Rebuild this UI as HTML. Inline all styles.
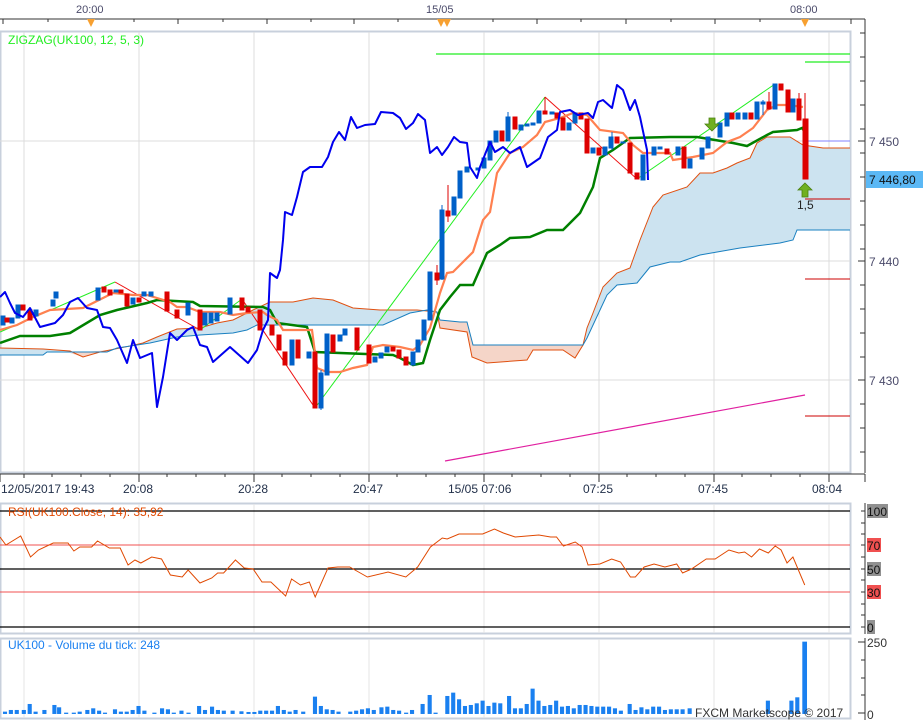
<!DOCTYPE html>
<html><head><meta charset="utf-8"><style>
body{margin:0;background:#fff;width:923px;height:720px;overflow:hidden}
svg{display:block;font-family:"Liberation Sans",sans-serif}
</style></head><body>
<svg width="923" height="720" viewBox="0 0 923 720">
<rect width="923" height="720" fill="#fff"/>
<!-- top axis -->
<g font-size="11" fill="#4a4a6a">
<text x="76" y="13">20:00</text><text x="426" y="13">15/05</text><text x="790" y="13">08:00</text>
</g>
<line x1="0" y1="19" x2="865" y2="19" stroke="#333"/>
<line x1="865" y1="19" x2="865" y2="473" stroke="#333"/>
<g stroke="#333">
<line x1="3" y1="19" x2="3" y2="24"/><line x1="48" y1="19" x2="48" y2="22"/><line x1="90" y1="19" x2="90" y2="24"/><line x1="134" y1="19" x2="134" y2="22"/><line x1="178" y1="19" x2="178" y2="24"/><line x1="223" y1="19" x2="223" y2="22"/><line x1="267" y1="19" x2="267" y2="24"/><line x1="311" y1="19" x2="311" y2="22"/><line x1="354" y1="19" x2="354" y2="24"/><line x1="398" y1="19" x2="398" y2="22"/><line x1="442" y1="19" x2="442" y2="24"/><line x1="493" y1="19" x2="493" y2="22"/><line x1="537" y1="19" x2="537" y2="24"/><line x1="581" y1="19" x2="581" y2="22"/><line x1="626" y1="19" x2="626" y2="24"/><line x1="671" y1="19" x2="671" y2="22"/><line x1="715" y1="19" x2="715" y2="24"/><line x1="760" y1="19" x2="760" y2="22"/><line x1="851" y1="19" x2="851" y2="24"/>
</g>
<g fill="#f7a030">
<polygon points="87,19 95,19 91,27"/><polygon points="437,19 445,19 441,27"/><polygon points="443,19 451,19 447,27"/><polygon points="801,19 809,19 805,27"/>
</g>
<!-- main frame -->
<rect x="0.5" y="31.5" width="850" height="441" fill="none" stroke="#c8d0dc" stroke-width="2"/>
<g stroke="#dcdcdc">
<line x1="24" y1="32" x2="24" y2="472"/><line x1="139" y1="32" x2="139" y2="472"/><line x1="254" y1="32" x2="254" y2="472"/><line x1="369" y1="32" x2="369" y2="472"/><line x1="484" y1="32" x2="484" y2="472"/><line x1="599" y1="32" x2="599" y2="472"/><line x1="714" y1="32" x2="714" y2="472"/><line x1="829" y1="32" x2="829" y2="472"/>
<line x1="0" y1="141" x2="850" y2="141"/><line x1="0" y1="261" x2="850" y2="261"/><line x1="0" y1="380" x2="850" y2="380"/>
</g>
<!-- price axis ticks -->
<g stroke="#333">
<line x1="860" y1="33" x2="865" y2="33"/><line x1="860" y1="57" x2="865" y2="57"/><line x1="860" y1="81" x2="865" y2="81"/><line x1="860" y1="105" x2="865" y2="105"/><line x1="860" y1="129" x2="865" y2="129"/><line x1="858" y1="141" x2="865" y2="141"/><line x1="860" y1="153" x2="865" y2="153"/><line x1="860" y1="177" x2="865" y2="177"/><line x1="860" y1="201" x2="865" y2="201"/><line x1="860" y1="225" x2="865" y2="225"/><line x1="860" y1="249" x2="865" y2="249"/><line x1="858" y1="261" x2="865" y2="261"/><line x1="860" y1="285" x2="865" y2="285"/><line x1="860" y1="309" x2="865" y2="309"/><line x1="860" y1="333" x2="865" y2="333"/><line x1="860" y1="357" x2="865" y2="357"/><line x1="858" y1="380" x2="865" y2="380"/><line x1="860" y1="404" x2="865" y2="404"/><line x1="860" y1="428" x2="865" y2="428"/><line x1="860" y1="452" x2="865" y2="452"/>
</g>
<g font-size="12" fill="#4a4a6a"><text x="869" y="146">7 450</text><text x="869" y="266">7 440</text><text x="869" y="385">7 430</text></g>
<line x1="805" y1="141" x2="850" y2="141" stroke="#8080ff"/>
<rect x="866" y="171" width="57" height="17" fill="#5bb8f5"/>
<text x="869" y="184" font-size="12" fill="#111">7 446,80</text>

<!-- cloud -->
<polygon fill="#cce3f0" points="0,348 43,349 70,351 47,352 43,355 0,355"/>
<polygon fill="#f5d5c8" points="70,353 83,357 100,352 107,352 117,348 110,350"/>
<polygon fill="#cce3f0" points="110,350 130,346 143,343 157,337 177,329 200,328 217,323 233,320 253,310 270,302 293,302 313,298 333,300 353,308 380,310 417,310 437,312 427,310 410,313 383,325 300,325 257,325 247,330 233,333 200,335 177,337 150,343 117,348"/>
<polygon fill="#f5d5c8" points="437,312 440,320 460,322 467,322 473,345 583,345 575,358 563,350 533,350 527,360 487,363 472,357 467,332 440,328"/>
<polygon fill="#cce3f0" points="583,345 587,328 593,313 603,287 617,273 630,268 640,240 653,207 663,195 687,187 700,173 713,173 727,168 737,163 750,158 757,143 767,137 790,137 803,145 823,148 850,148 850,230 797,230 793,240 780,243 740,248 700,255 680,262 670,262 650,267 637,283 617,285 607,295 600,310 587,338"/>
<polyline fill="none" stroke="#e05010" stroke-width="1" points="0,348 43,349 70,351 83,357 100,352 110,350 130,346 143,343 157,337 177,329 200,328 217,323 233,320 253,310 270,302 293,302 313,298 333,300 353,308 380,310 417,310 437,312 440,328 467,332 472,357 487,363 527,360 533,350 563,350 575,358 583,345 587,328 593,313 603,287 617,273 630,268 640,240 653,207 663,195 687,187 700,173 713,173 727,168 737,163 750,158 757,143 767,137 790,137 803,145 823,148 850,148"/>
<polyline fill="none" stroke="#1a80c0" stroke-width="1" points="0,355 43,355 47,352 107,352 117,348 150,343 177,337 200,335 233,333 247,330 257,325 300,325 383,325 410,313 427,310 437,312 440,320 460,322 467,322 473,345 583,345 587,338 600,310 607,295 617,285 637,283 650,267 670,262 680,262 700,255 740,248 780,243 793,240 797,230 850,230"/>

<!-- magenta -->
<line x1="445" y1="461" x2="805" y2="395" stroke="#e020a0" stroke-width="1.2"/>

<!-- zigzag -->
<polyline fill="none" stroke="#22ee22" stroke-width="1" points="0,332 115,282"/>
<polyline fill="none" stroke="#22ee22" stroke-width="1" points="200,330 242,299"/>
<polyline fill="none" stroke="#22ee22" stroke-width="1" points="315,408 545,97"/>
<polyline fill="none" stroke="#22ee22" stroke-width="1" points="637,179 775,84"/>
<polyline fill="none" stroke="#ee1111" stroke-width="1" points="115,282 200,330"/>
<polyline fill="none" stroke="#ee1111" stroke-width="1" points="242,299 315,408"/>
<polyline fill="none" stroke="#ee1111" stroke-width="1" points="545,97 637,179"/>
<line x1="436" y1="54" x2="850" y2="54" stroke="#22ee22" stroke-width="1.3"/>
<line x1="805" y1="62" x2="850" y2="62" stroke="#22ee22" stroke-width="1.3"/>
<line x1="805" y1="199" x2="850" y2="199" stroke="#cc0000"/>
<line x1="805" y1="279" x2="850" y2="279" stroke="#cc0000"/>
<line x1="805" y1="416" x2="850" y2="416" stroke="#cc0000"/>

<!-- kijun green -->
<polyline fill="none" stroke="#008000" stroke-width="2.5" points="0,343 20,336 50,336 70,333 100,315 117,310 147,303 157,300 193,302 200,306 263,307 270,310 277,323 307,327 315,352 393,355 400,358 413,365 423,363 430,340 440,310 450,297 460,285 473,285 487,253 500,245 510,238 530,237 547,230 563,230 580,213 593,187 600,158 613,150 630,138 670,137 697,137 733,143 747,146 767,135 773,132 797,130 802,128 805,132"/>
<!-- tenkan orange -->
<polyline fill="none" stroke="#ff8050" stroke-width="2.2" points="0,330 17,325 33,317 50,310 83,308 103,298 113,293 133,295 147,295 170,302 177,307 187,307 200,312 220,312 233,315 247,313 263,312 267,315 277,320 283,330 312,330 317,368 327,372 340,372 353,368 367,365 373,347 383,345 400,347 413,350 420,345 430,328 440,293 447,273 453,272 473,252 483,220 490,212 497,173 510,153 523,147 537,135 545,122 560,118 573,113 587,115 600,130 623,133 633,145 643,153 670,153 673,160 693,157 713,153 727,142 740,137 753,128 767,110 777,105 788,105 803,107"/>

<!-- candles -->
<g stroke-width="1">
<g fill="#0060c8" stroke="#0060c8">
<rect x="1" y="316" width="4" height="9"/><rect x="10" y="318" width="4" height="5"/><rect x="16" y="305" width="4" height="13"/><rect x="34" y="310" width="4" height="6"/><rect x="51" y="300" width="4" height="6"/><rect x="54" y="292" width="4" height="6"/><rect x="96" y="288" width="4" height="12"/><rect x="114" y="290" width="4" height="2"/><rect x="131" y="298" width="4" height="6"/><rect x="142" y="292" width="4" height="4"/><rect x="149" y="292" width="4" height="4"/><rect x="186" y="303" width="4" height="12"/><rect x="203" y="313" width="4" height="12"/><rect x="209" y="313" width="4" height="10"/><rect x="215" y="313" width="4" height="8"/><rect x="228" y="298" width="4" height="16"/><rect x="290" y="340" width="4" height="25"/><rect x="307" y="352" width="4" height="6"/><rect x="319" y="373" width="4" height="35"/><rect x="325" y="334" width="4" height="41"/><rect x="338" y="335" width="4" height="6"/><rect x="343" y="329" width="4" height="6"/><rect x="373" y="357" width="4" height="5"/><rect x="379" y="353" width="4" height="5"/><rect x="385" y="347" width="4" height="5"/><rect x="411" y="352" width="4" height="13"/><rect x="416" y="340" width="4" height="12"/><rect x="422" y="320" width="4" height="20"/><rect x="428" y="272" width="4" height="48"/><rect x="440" y="210" width="4" height="69"/><rect x="452" y="197" width="4" height="18"/><rect x="458" y="171" width="4" height="27"/><rect x="465" y="167" width="4" height="5"/><rect x="476" y="168" width="4" height="2"/><rect x="482" y="158" width="4" height="10"/><rect x="488" y="141" width="4" height="19"/><rect x="494" y="131" width="4" height="11"/><rect x="506" y="117" width="4" height="24"/><rect x="519" y="125" width="4" height="5"/><rect x="525" y="124" width="4" height="2"/><rect x="531" y="123" width="4" height="2"/><rect x="537" y="111" width="4" height="12"/><rect x="550" y="112" width="4" height="2"/><rect x="567" y="123" width="4" height="7"/><rect x="573" y="113" width="4" height="10"/><rect x="591" y="148" width="4" height="5"/><rect x="603" y="147" width="4" height="8"/><rect x="609" y="137" width="4" height="11"/><rect x="621" y="142" width="4" height="1"/><rect x="641" y="155" width="4" height="25"/><rect x="652" y="147" width="4" height="8"/><rect x="658" y="147" width="4" height="2"/><rect x="676" y="147" width="4" height="8"/><rect x="688" y="159" width="4" height="9"/><rect x="700" y="148" width="4" height="11"/><rect x="706" y="137" width="4" height="11"/><rect x="718" y="123" width="4" height="14"/><rect x="725" y="113" width="4" height="13"/><rect x="736" y="113" width="4" height="6"/><rect x="743" y="113" width="4" height="6"/><rect x="755" y="102" width="4" height="17"/><rect x="761" y="102" width="4" height="2"/><rect x="773" y="84" width="4" height="25"/><rect x="791" y="99" width="4" height="13"/>
</g>
<g fill="#dd0000" stroke="#dd0000">
<rect x="5" y="318" width="4" height="4"/><rect x="21" y="305" width="4" height="5"/><rect x="28" y="310" width="4" height="10"/><rect x="102" y="287" width="4" height="5"/><rect x="108" y="290" width="4" height="5"/><rect x="119" y="290" width="4" height="3"/><rect x="125" y="294" width="4" height="12"/><rect x="137" y="298" width="4" height="4"/><rect x="165" y="292" width="4" height="19"/><rect x="175" y="310" width="4" height="8"/><rect x="198" y="310" width="4" height="20"/><rect x="240" y="298" width="4" height="12"/><rect x="246" y="307" width="4" height="5"/><rect x="258" y="310" width="4" height="20"/><rect x="270" y="325" width="4" height="10"/><rect x="277" y="335" width="4" height="15"/><rect x="283" y="352" width="4" height="13"/><rect x="296" y="340" width="4" height="18"/><rect x="313" y="352" width="4" height="56"/><rect x="331" y="335" width="4" height="17"/><rect x="355" y="328" width="4" height="22"/><rect x="367" y="345" width="4" height="18"/><rect x="391" y="347" width="4" height="4"/><rect x="397" y="350" width="4" height="8"/><rect x="404" y="357" width="4" height="8"/><rect x="435" y="273" width="4" height="7"/><rect x="446" y="211" width="4" height="5"/><rect x="500" y="131" width="4" height="10"/><rect x="513" y="117" width="4" height="12"/><rect x="543" y="111" width="4" height="3"/><rect x="555" y="113" width="4" height="5"/><rect x="561" y="118" width="4" height="12"/><rect x="579" y="113" width="4" height="6"/><rect x="585" y="119" width="4" height="34"/><rect x="597" y="148" width="4" height="7"/><rect x="615" y="137" width="4" height="6"/><rect x="628" y="143" width="4" height="30"/><rect x="635" y="173" width="4" height="6"/><rect x="665" y="149" width="4" height="5"/><rect x="682" y="147" width="4" height="21"/><rect x="730" y="113" width="4" height="6"/><rect x="749" y="113" width="4" height="6"/><rect x="767" y="102" width="4" height="7"/><rect x="779" y="84" width="4" height="6"/><rect x="786" y="90" width="4" height="22"/><rect x="797" y="99" width="4" height="21"/><rect x="803" y="119" width="5" height="60"/>
<line x1="805" y1="93" x2="805" y2="120"/><line x1="437" y1="265" x2="437" y2="285"/><line x1="448" y1="185" x2="448" y2="222"/><line x1="545" y1="97" x2="545" y2="112"/><line x1="799" y1="93" x2="799" y2="100"/><line x1="769" y1="92" x2="769" y2="103"/>
</g>
<g stroke="#0060c8"><line x1="442" y1="205" x2="442" y2="280"/><line x1="321" y1="370" x2="321" y2="410"/><line x1="612" y1="132" x2="612" y2="150"/><line x1="508" y1="112" x2="508" y2="120"/><line x1="763" y1="100" x2="763" y2="115"/></g>
</g>

<!-- blue line -->
<polyline fill="none" stroke="#0000ee" stroke-width="2" stroke-linejoin="round" points="0,297 5,292 10,303 15,313 23,317 30,308 40,327 55,323 63,315 70,302 78,298 87,308 97,310 103,327 110,328 117,340 127,363 133,340 140,358 152,353 157,407 163,377 170,333 177,340 187,330 193,327 200,345 207,347 213,362 230,347 248,363 257,350 263,330 268,320 270,273 277,278 280,270 283,240 285,212 292,215 297,197 303,172 310,167 322,167 328,157 333,142 339,132 345,140 351,117 357,128 365,125 375,124 381,112 393,113 400,118 406,129 413,123 418,114 425,120 430,153 437,147 442,155 448,147 454,137 460,142 467,143 470,167 477,178 480,167 490,142 495,152 503,147 510,153 520,147 527,167 540,158 548,137 557,130 560,112 570,110 578,115 588,113 593,118 598,102 603,100 612,108 617,85 623,90 630,110 635,100 640,117 647,150 648,180"/>

<text x="8" y="44" font-size="12" fill="#22ee22">ZIGZAG(UK100, 12, 5, 3)</text>
<!-- green up arrow -->
<polygon points="805,183 812,190 808,190 808,197 802,197 802,190 798,190" fill="#70b020" stroke="#4a8010" stroke-width="0.8"/>
<polygon points="712,131 719,124 715,124 715,118 709,118 709,124 705,124" fill="#70b020" stroke="#4a8010" stroke-width="0.8"/>
<text x="797" y="209" font-size="12" fill="#222">1,5</text>

<!-- bottom time axis -->
<line x1="0" y1="474" x2="865" y2="474" stroke="#333"/>
<g stroke="#333">
<line x1="0" y1="474" x2="0" y2="482"/><line x1="24" y1="474" x2="24" y2="478"/><line x1="139" y1="474" x2="139" y2="482"/><line x1="254" y1="474" x2="254" y2="482"/><line x1="369" y1="474" x2="369" y2="482"/><line x1="484" y1="474" x2="484" y2="482"/><line x1="599" y1="474" x2="599" y2="482"/><line x1="714" y1="474" x2="714" y2="482"/><line x1="829" y1="474" x2="829" y2="482"/><line x1="865" y1="474" x2="865" y2="482"/>
<line x1="52" y1="474" x2="52" y2="477"/><line x1="81" y1="474" x2="81" y2="477"/><line x1="110" y1="474" x2="110" y2="477"/><line x1="167" y1="474" x2="167" y2="477"/><line x1="196" y1="474" x2="196" y2="477"/><line x1="225" y1="474" x2="225" y2="477"/><line x1="282" y1="474" x2="282" y2="477"/><line x1="311" y1="474" x2="311" y2="477"/><line x1="340" y1="474" x2="340" y2="477"/><line x1="397" y1="474" x2="397" y2="477"/><line x1="426" y1="474" x2="426" y2="477"/><line x1="455" y1="474" x2="455" y2="477"/><line x1="512" y1="474" x2="512" y2="477"/><line x1="541" y1="474" x2="541" y2="477"/><line x1="570" y1="474" x2="570" y2="477"/><line x1="627" y1="474" x2="627" y2="477"/><line x1="656" y1="474" x2="656" y2="477"/><line x1="685" y1="474" x2="685" y2="477"/><line x1="742" y1="474" x2="742" y2="477"/><line x1="771" y1="474" x2="771" y2="477"/><line x1="800" y1="474" x2="800" y2="477"/>
</g>
<g font-size="12" fill="#22304a"><text x="1" y="493">12/05/2017 19:43</text><text x="123" y="493">20:08</text><text x="238" y="493">20:28</text><text x="353" y="493">20:47</text><text x="448" y="493">15/05 07:06</text><text x="583" y="493">07:25</text><text x="698" y="493">07:45</text><text x="812" y="493">08:04</text></g>

<!-- RSI panel -->
<rect x="0.5" y="503.5" width="850" height="130" fill="none" stroke="#c8d0dc" stroke-width="2"/>
<g stroke="#e4e4e4"><line x1="24" y1="504" x2="24" y2="633"/><line x1="139" y1="504" x2="139" y2="633"/><line x1="254" y1="504" x2="254" y2="633"/><line x1="369" y1="504" x2="369" y2="633"/><line x1="484" y1="504" x2="484" y2="633"/><line x1="599" y1="504" x2="599" y2="633"/><line x1="714" y1="504" x2="714" y2="633"/><line x1="829" y1="504" x2="829" y2="633"/></g>
<line x1="0" y1="511" x2="850" y2="511" stroke="#000" stroke-width="1.3"/>
<line x1="0" y1="569" x2="850" y2="569" stroke="#000" stroke-width="1.3"/>
<line x1="0" y1="627" x2="850" y2="627" stroke="#000" stroke-width="1.3"/>
<line x1="0" y1="545" x2="850" y2="545" stroke="#f05050"/>
<line x1="0" y1="592" x2="850" y2="592" stroke="#f05050"/>
<line x1="865" y1="503" x2="865" y2="634" stroke="#333"/>
<g stroke="#333"><line x1="861" y1="511" x2="865" y2="511"/><line x1="861" y1="523" x2="865" y2="523"/><line x1="861" y1="534" x2="865" y2="534"/><line x1="861" y1="545" x2="865" y2="545"/><line x1="861" y1="557" x2="865" y2="557"/><line x1="861" y1="569" x2="865" y2="569"/><line x1="861" y1="580" x2="865" y2="580"/><line x1="861" y1="592" x2="865" y2="592"/><line x1="861" y1="604" x2="865" y2="604"/><line x1="861" y1="615" x2="865" y2="615"/><line x1="861" y1="627" x2="865" y2="627"/></g>
<rect x="867" y="504" width="21" height="14" fill="#909090"/><rect x="867" y="538" width="14" height="14" fill="#f05050"/><rect x="867" y="562" width="14" height="14" fill="#909090"/><rect x="867" y="585" width="14" height="14" fill="#f05050"/><rect x="867" y="620" width="8" height="14" fill="#909090"/>
<g font-size="12" fill="#111"><text x="867" y="516">100</text><text x="867" y="550">70</text><text x="867" y="574">50</text><text x="867" y="597">30</text><text x="867" y="632">0</text></g>
<g transform="scale(0.985,1)">
<polyline fill="none" stroke="#e04800" stroke-width="1" points="0,537 6,545 21,536 31,557 39,550 54,543 69,543 75,551 81,547 93,547 99,541 111,548 122,548 130,565 137,560 143,563 154,557 164,559 173,575 185,577 191,570 203,583 215,578 221,573 227,573 239,560 248,568 257,569 266,582 275,582 290,596 296,579 305,585 314,582 320,597 333,568 343,567 355,567 364,572 373,577 394,572 412,577 424,567 437,547 449,538 454,539 466,534 490,534 502,529 511,533 523,537 547,535 559,537 565,537 572,546 584,542 591,547 597,565 609,564 621,559 630,562 640,577 645,577 654,567 664,564 675,567 687,564 693,573 702,569 717,559 726,559 740,550 750,553 756,552 763,557 771,549 780,553 787,546 793,550 799,563 805,557 817,585"/>
</g>
<text x="8" y="516" font-size="12" fill="#e04800">RSI(UK100.Close, 14): 35,92</text>

<!-- volume panel -->
<rect x="0.5" y="638.5" width="850" height="80" fill="none" stroke="#c8d0dc" stroke-width="2"/>
<g stroke="#e4e4e4"><line x1="24" y1="639" x2="24" y2="718"/><line x1="139" y1="639" x2="139" y2="718"/><line x1="254" y1="639" x2="254" y2="718"/><line x1="369" y1="639" x2="369" y2="718"/><line x1="484" y1="639" x2="484" y2="718"/><line x1="599" y1="639" x2="599" y2="718"/><line x1="714" y1="639" x2="714" y2="718"/><line x1="829" y1="639" x2="829" y2="718"/></g>
<line x1="865" y1="638" x2="865" y2="720" stroke="#333"/>
<g stroke="#333"><line x1="858" y1="642" x2="865" y2="642"/><line x1="861" y1="660" x2="865" y2="660"/><line x1="861" y1="678" x2="865" y2="678"/><line x1="861" y1="695" x2="865" y2="695"/><line x1="858" y1="713" x2="865" y2="713"/></g>
<g font-size="12" fill="#333"><text x="867" y="647">250</text><text x="867" y="719">0</text></g>
<g fill="#1a80f0" transform="translate(0,460) scale(0.5882,0.3333)">
<rect x="5" y="755" width="7" height="7"/><rect x="15" y="750" width="7" height="12"/><rect x="25" y="750" width="7" height="12"/><rect x="37" y="750" width="7" height="12"/><rect x="47" y="732" width="7" height="30"/><rect x="57" y="755" width="7" height="7"/><rect x="72" y="750" width="7" height="12"/><rect x="89" y="735" width="7" height="27"/><rect x="97" y="742" width="7" height="20"/><rect x="109" y="758" width="7" height="4"/><rect x="122" y="758" width="7" height="4"/><rect x="132" y="755" width="7" height="7"/><rect x="145" y="750" width="7" height="12"/><rect x="155" y="745" width="7" height="17"/><rect x="165" y="752" width="7" height="10"/><rect x="175" y="758" width="7" height="4"/><rect x="192" y="748" width="7" height="14"/><rect x="202" y="755" width="7" height="7"/><rect x="212" y="755" width="7" height="7"/><rect x="222" y="750" width="7" height="12"/><rect x="232" y="738" width="7" height="24"/><rect x="242" y="752" width="7" height="10"/><rect x="259" y="758" width="7" height="4"/><rect x="272" y="745" width="7" height="17"/><rect x="282" y="748" width="7" height="14"/><rect x="292" y="758" width="7" height="4"/><rect x="305" y="752" width="7" height="10"/><rect x="317" y="758" width="7" height="4"/><rect x="335" y="738" width="7" height="24"/><rect x="345" y="750" width="7" height="12"/><rect x="357" y="740" width="7" height="22"/><rect x="367" y="750" width="7" height="12"/><rect x="377" y="752" width="7" height="10"/><rect x="392" y="752" width="7" height="10"/><rect x="407" y="754" width="7" height="8"/><rect x="419" y="756" width="7" height="6"/><rect x="429" y="756" width="7" height="6"/><rect x="439" y="752" width="7" height="10"/><rect x="449" y="752" width="7" height="10"/><rect x="459" y="752" width="7" height="10"/><rect x="469" y="738" width="7" height="24"/><rect x="479" y="750" width="7" height="12"/><rect x="489" y="755" width="7" height="7"/><rect x="499" y="750" width="7" height="12"/><rect x="512" y="755" width="7" height="7"/><rect x="532" y="710" width="7" height="52"/><rect x="542" y="738" width="7" height="24"/><rect x="552" y="748" width="7" height="14"/><rect x="562" y="750" width="7" height="12"/><rect x="572" y="755" width="7" height="7"/><rect x="592" y="755" width="7" height="7"/><rect x="602" y="752" width="7" height="10"/><rect x="612" y="748" width="7" height="14"/><rect x="622" y="745" width="7" height="17"/><rect x="632" y="750" width="7" height="12"/><rect x="645" y="742" width="7" height="20"/><rect x="655" y="740" width="7" height="22"/><rect x="665" y="750" width="7" height="12"/><rect x="675" y="752" width="7" height="10"/><rect x="687" y="758" width="7" height="4"/><rect x="697" y="750" width="7" height="12"/><rect x="715" y="732" width="7" height="30"/><rect x="727" y="705" width="7" height="57"/><rect x="737" y="758" width="7" height="4"/><rect x="757" y="708" width="7" height="54"/><rect x="767" y="698" width="7" height="64"/><rect x="777" y="718" width="7" height="44"/><rect x="787" y="738" width="7" height="24"/><rect x="797" y="735" width="7" height="27"/><rect x="807" y="730" width="7" height="32"/><rect x="817" y="722" width="7" height="40"/><rect x="827" y="738" width="7" height="24"/><rect x="837" y="728" width="7" height="34"/><rect x="847" y="730" width="7" height="32"/><rect x="862" y="708" width="7" height="54"/><rect x="872" y="745" width="7" height="17"/><rect x="882" y="745" width="7" height="17"/><rect x="892" y="732" width="7" height="30"/><rect x="902" y="686" width="7" height="76"/><rect x="912" y="722" width="7" height="40"/><rect x="922" y="738" width="7" height="24"/><rect x="932" y="735" width="7" height="27"/><rect x="942" y="722" width="7" height="40"/><rect x="952" y="740" width="7" height="22"/><rect x="962" y="738" width="7" height="24"/><rect x="972" y="745" width="7" height="17"/><rect x="982" y="735" width="7" height="27"/><rect x="992" y="735" width="7" height="27"/><rect x="1002" y="738" width="7" height="24"/><rect x="1012" y="740" width="7" height="22"/><rect x="1022" y="740" width="7" height="22"/><rect x="1032" y="740" width="7" height="22"/><rect x="1042" y="745" width="7" height="17"/><rect x="1052" y="752" width="7" height="10"/><rect x="1067" y="732" width="7" height="30"/><rect x="1077" y="750" width="7" height="12"/><rect x="1087" y="742" width="7" height="20"/><rect x="1097" y="748" width="7" height="14"/><rect x="1107" y="740" width="7" height="22"/><rect x="1117" y="740" width="7" height="22"/><rect x="1127" y="750" width="7" height="12"/><rect x="1137" y="748" width="7" height="14"/><rect x="1147" y="748" width="7" height="14"/><rect x="1157" y="748" width="7" height="14"/><rect x="1169" y="745" width="7" height="17"/><rect x="1302" y="722" width="7" height="40"/><rect x="1342" y="722" width="7" height="40"/><rect x="1352" y="712" width="7" height="50"/><rect x="1364" y="545" width="8" height="217"/>
</g>
<text x="8" y="649" font-size="12" fill="#1a80f0">UK100 - Volume du tick: 248</text>
<text x="695" y="717" font-size="12" fill="#333">FXCM Marketscope © 2017</text>
</svg>
</body></html>
